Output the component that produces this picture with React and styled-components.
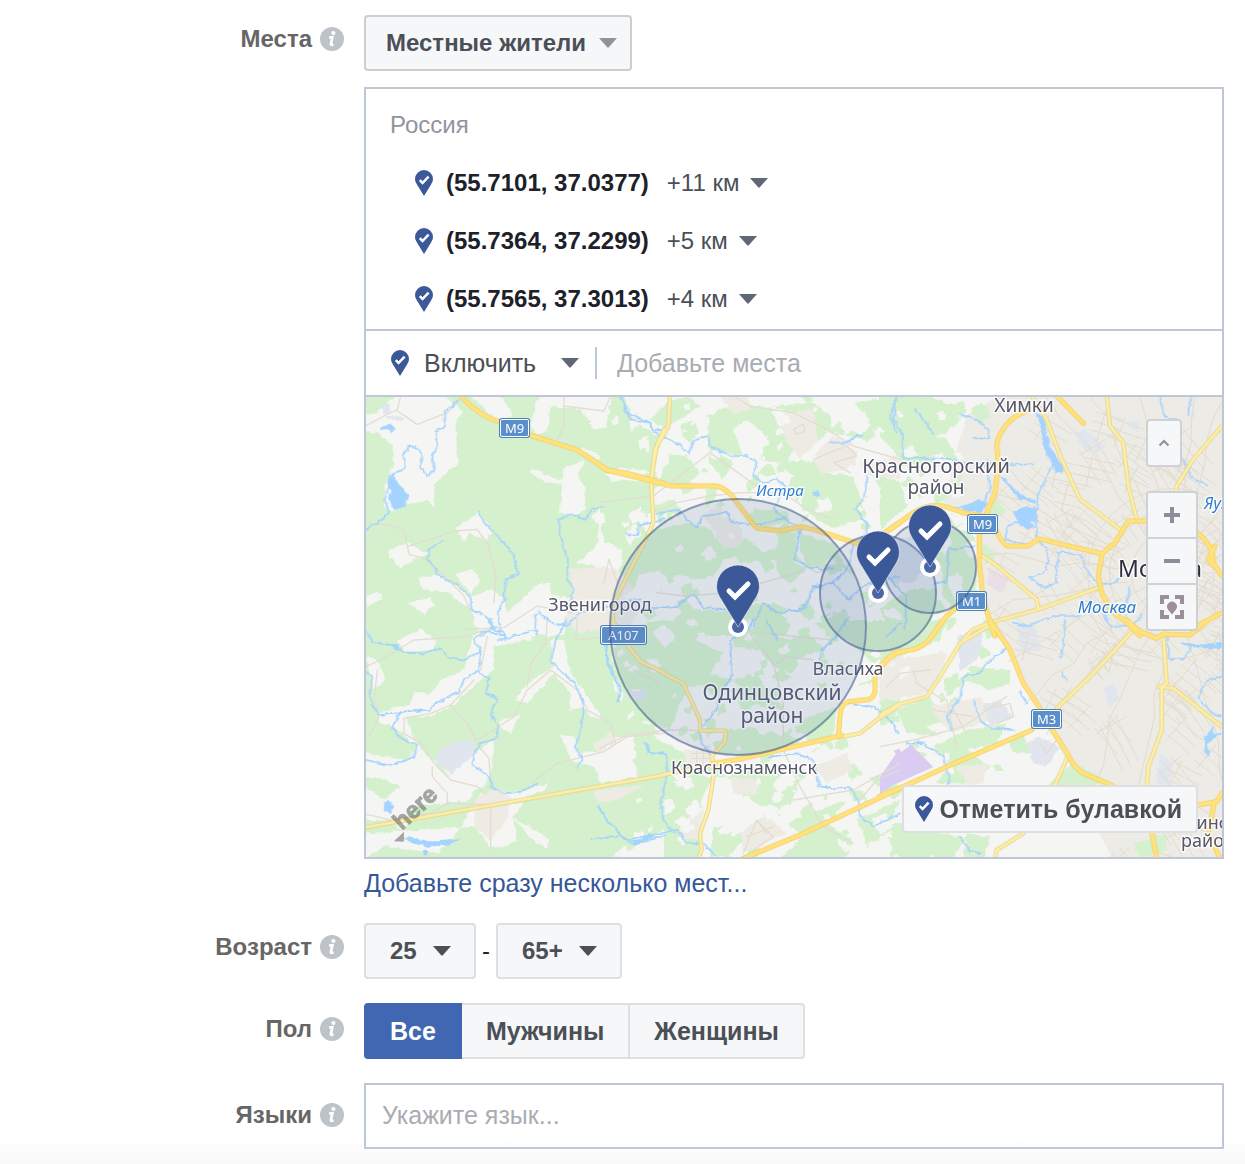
import React from 'react';
import styled, { createGlobalStyle, css } from 'styled-components';

const GlobalStyle = createGlobalStyle`
	* {
		box-sizing: border-box;
	}
	body {
		margin: 0;
		background: #fff;
		font-family: 'Liberation Sans', Arial, Helvetica, sans-serif;
		font-size: 24px;
		line-height: 28px;
		color: #1d2129;
	}
	button,
	input,
	select {
		margin: 0;
		font: inherit;
	}
	button,
	select {
		cursor: pointer;
	}
`;

const Form = styled.form`
	display: flex;
	flex-direction: column;
	gap: 24px;
	padding: 15px 21px 15px 0;
	background: linear-gradient(to top, #f9f9f9, #fff 28px);
`;

const Row = styled.div`
	display: grid;
	grid-template-columns: 344px minmax(0, 1fr);
	column-gap: 20px;
	align-items: start;
`;

const RowLabel = styled.div`
	display: flex;
	justify-content: flex-end;
	align-items: center;
	gap: 8px;
	padding-top: ${(p) => p.$top || 12}px;
	height: ${(p) => (p.$top || 12) + 24}px;
	font-weight: bold;
	color: #666;

	svg {
		flex-shrink: 0;
	}
`;

const Stack = styled.div`
	display: flex;
	flex-direction: column;
	align-items: flex-start;
`;

/* the caret shares the grid cell of the select */
const SelectWrap = styled.div`
	display: inline-grid;
	align-items: center;

	select,
	svg {
		grid-area: 1 / 1;
	}
	svg {
		justify-self: end;
		margin-right: ${(p) => p.$caretRight || 0}px;
		pointer-events: none;
	}
`;

const BoxSelect = styled.select`
	appearance: none;
	height: 56px;
	padding: 0 ${(p) => p.$right}px 0 ${(p) => p.$left}px;
	border: 2px solid ${(p) => (p.$dark ? '#ccced2' : '#dddfe2')};
	border-radius: 4px;
	background: #f6f7f9;
	color: #4b4f56;
	font-weight: bold;
`;

const PlainSelect = styled.select`
	appearance: none;
	height: 32px;
	padding: 0 ${(p) => p.$right}px 0 0;
	border: 0;
	background: transparent;
	color: #4b4f56;
	font-size: ${(p) => (p.$large ? 25 : 24)}px;
`;

const Locations = styled.div`
	align-self: stretch;
	margin: 16px 0 10px;
	border: 2px solid #bdc7d8;
	border-top-color: #c4c8cf;
	background: #fff;
`;

const LocationList = styled.ul`
	margin: 0;
	padding: 7px 24px 1px;
	list-style: none;
`;

const Country = styled.li`
	display: flex;
	align-items: center;
	height: 58px;
	color: #90949c;
`;

const Location = styled.li`
	display: flex;
	align-items: center;
	height: 58px;
	padding-left: 25px;

	b {
		margin: 0 18px 0 13px;
	}
`;

const AddBar = styled.div`
	display: flex;
	align-items: center;
	height: 68px;
	padding: 0 25px;
	border: solid #bdc7d8;
	border-width: 2px 0;

	> svg {
		margin-right: 15px;
	}
`;

const Divider = styled.span`
	width: 2px;
	height: 32px;
	margin: 0 20px 0 16px;
	background: #bdc7d8;
`;

const PlaceInput = styled.input`
	flex: 1;
	min-width: 0;
	height: 40px;
	padding: 0;
	border: 0;
	outline: 0;
	background: transparent;
	font-size: 25px;

	&::placeholder {
		color: #a9acb1;
		opacity: 1;
	}
`;

const MapBox = styled.div`
	position: relative;
	overflow: hidden;

	> svg {
		display: block;
		width: 100%;
		height: 460px;
	}
`;

const MapControls = styled.div`
	position: absolute;
	top: 22px;
	right: 24px;
	display: flex;
	flex-direction: column;
	align-items: flex-start;
	gap: 24px;
`;

const mapButton = css`
	display: flex;
	align-items: center;
	justify-content: center;
	padding: 0;
	background: #f6f7f9;
`;

const UpButton = styled.button`
	${mapButton}
	width: 36px;
	height: 48px;
	border: 2px solid #cfd1d5;
	border-radius: 4px;
`;

const ZoomGroup = styled.div`
	width: 52px;
	border: 2px solid #cfd1d5;
	border-radius: 4px;
	overflow: hidden;

	button {
		${mapButton}
		width: 100%;
		height: 44px;
		border: 0;
	}
	button + button {
		height: 46px;
		border-top: 2px solid #cfd1d5;
	}
`;

const DropPinButton = styled.button`
	${mapButton}
	position: absolute;
	right: 24px;
	bottom: 24px;
	gap: 6px;
	height: 48px;
	padding: 0 14px 0 11px;
	border: 2px solid #dddfe2;
	border-radius: 4px;
	color: #4b4f56;
	font-size: 25px;
	font-weight: bold;
`;

const BulkLink = styled.a`
	margin-bottom: 2px;
	color: #365899;
	font-size: 25px;
	text-decoration: none;
`;

const Range = styled.div`
	display: flex;
	align-items: center;
	gap: 6px;
`;

const Segments = styled.div`
	display: flex;
`;

/* neighbours share one border, the active segment lies over both */
const Segment = styled.button`
	position: relative;
	height: 56px;
	padding: 0 24px;
	border: 2px solid #dddfe2;
	background: #f6f7f9;
	color: #4b4f56;
	font-size: 25px;
	font-weight: bold;

	&:not(:first-child) {
		margin-left: -2px;
	}
	&:first-child {
		border-radius: 4px 0 0 4px;
	}
	&:last-child {
		border-radius: 0 4px 4px 0;
	}
	${(p) =>
		p.$active &&
		css`
			z-index: 1;
			border-color: #4267b2;
			background: #4267b2;
			color: #fff;
		`}
`;

const LanguageInput = styled.input`
	width: 100%;
	height: 66px;
	padding: 0 16px 2px;
	border: 2px solid #bdc7d8;
	background: transparent;
	font-size: 25px;

	&::placeholder {
		color: #a9acb1;
		opacity: 1;
	}
`;

const InfoIcon = () => (
	<svg width="24" height="24" viewBox="0 0 24 24" aria-hidden="true">
		<circle cx="12" cy="12" r="12" fill="#bec3c9" />
		<circle cx="13.4" cy="6" r="2.1" fill="#fff" />
		<path
			d="M9.2 10.4h3.200l-1.500 6.200q-.3 1.600 1 1.300l1.600-.6"
			fill="none"
			stroke="#fff"
			strokeWidth="2.6"
		/>
	</svg>
);

const Caret = ({ color = '#606775' }) => (
	<svg width="18" height="10" viewBox="0 0 18 10" aria-hidden="true">
		<path d="M0 0h18L9.8 9.3q-.8.8-1.6 0z" fill={color} />
	</svg>
);

const PIN = 'M0 0L-16.5-27C-20-32.500-21.400-36-21.400-40.600A21.400 21.400 0 0 1 21.400-40.600C21.400-36 20-32.500 16.500-27Z';

const PinIcon = () => (
	<svg width="18" height="26" viewBox="-21.500 -62 43 62" aria-hidden="true">
		<path d={PIN} fill="#3b5998" />
		<path
			d="M-10-38l6.500 7L11-46"
			fill="none"
			stroke="#fff"
			strokeWidth="6"
		/>
	</svg>
);

/* ---------- map drawing ---------- */

// Origins of the six map tiles. Inside a tile one pixel is three units.
const TILES = {
	a: [-6, -3],
	b: [702, -3],
	c: [1542, -3],
	d: [-6, 669],
	e: [702, 669],
	f: [1542, 669],
};

const FIELDS = {
	a: [
		'M95 0L240 0 300 45 275 75 280 205 240 235 210 270 212 335 190 315 130 325 75 350 60 330 62 270 90 205 85 150 40 110 5 105 5 60 40 45Z',
		'M320 0L405 0 440 40 440 65 400 75Z',
		'M500 80L525 0 745 0 725 95 690 100 650 40 560 30 550 105 515 118Z',
		'M780 0L900 0 900 110 860 125 810 75Z',
		'M650 155L705 175 710 190 660 175Z',
		'M750 215L795 172 850 190 860 240Z',
		'M495 225L515 218 560 245 598 250 600 215 665 190 640 235 665 275 662 345 625 360 585 348 595 265 545 258Z',
		'M720 295L785 315 712 390 720 440 780 450 775 500 750 560 690 510 635 500 690 460 700 440 705 385 680 360 722 325Z',
		'M275 395L345 350 385 400 365 435 320 410 300 440Z',
		'M75 460L130 440 190 475 155 490 110 515 75 480Z',
		'M160 545L230 535 320 600 385 580 420 605 430 650 520 565 560 560 565 600 620 605 600 720 380 720 330 690 320 640 250 590 175 580Z',
		'M270 535L325 520 350 555 320 590Z',
		'M130 620L200 605 210 630 180 655Z',
		'M5 600L40 590 55 610 10 630Z',
		'M820 340L850 345 860 380 835 370Z',
	],
	d: [
		'M100 60L170 28 220 65 210 90 120 95Z',
		'M330 40L400 0 520 10 500 60 390 80 390 150 350 180 260 260 200 290 130 290 150 360 250 470 340 490 320 540 150 560 120 640 80 600 5 600 5 500 60 540 110 500 60 480 5 470 5 400 130 420 160 380 90 320 50 310 40 280 140 250 150 220 200 220 230 180 300 150 310 110Z',
		'M240 450L330 400 390 360 385 440 360 500 300 520Z',
		'M450 240L500 180 570 140 560 60 600 60 620 160 700 270 720 300 680 290 660 260 620 270 620 220 570 160 490 250Z',
		'M410 300L470 285 440 340 405 320Z',
		'M590 345L635 350 640 400 720 390 760 330 810 350 820 470 710 490 690 440 620 420Z',
		'M745 310L750 180 780 190 775 310Z',
		'M740 0L900 0 860 60 880 110 800 150 770 180 745 120Z',
		'M5 110L40 120 65 180 30 210Z',
		'M350 520L430 545 480 550 445 590 460 660 420 680 380 680 330 620 5 640 5 715 60 680 220 700 280 640Z',
		'M440 590L560 660 550 685 520 670Z',
		'M380 520L480 510 555 490 540 510 450 545Z',
		'M820 650L900 620 900 715 760 715Z',
	],
};

// forests on the lighter right part of the map
const WOODS = {
	b: [
		'M0 100L75 60 150 105 180 140 150 225 60 215 20 235 0 200Z',
		'M0 270L60 250 150 260 160 380 130 440 70 480 0 340Z',
		'M150 70L200 20 260 0 300 30 240 70 190 95Z',
		'M320 90L350 40 480 30 600 60 610 110 560 200 480 190 500 120 440 70 400 100 430 180 340 160 400 200 370 250 330 200Z',
		'M200 170L260 180 300 230 270 260 180 260Z',
		'M520 30L640 20 720 80 800 130 690 110 640 80Z',
		'M760 20L900 0 900 130 820 80Z',
		'M530 200L640 190 680 230 760 240 800 360 700 400 620 350 560 280 580 240Z',
		'M160 330L220 310 250 350 180 390Z',
		'M130 440L150 405 250 380 330 400 350 430 395 455 440 425 490 470 540 455 545 490 420 500 390 470 340 540 280 550 210 520 90 540 60 570Z',
		'M470 340L560 345 570 380 480 390Z',
		'M600 410L700 440 740 520 620 510 600 460Z',
		'M530 400L590 410 585 500 620 520 570 560 530 530Z',
		'M205 690L240 650 290 640 400 650 440 690 400 720 200 720Z',
		'M430 630L520 620 580 650 560 720 480 710Z',
		'M660 660L740 640 770 720 680 720Z',
	],
	c: [
		'M0 0L110 0 180 10 240 60 200 110 130 130 60 180 0 120Z',
		'M40 130L130 110 200 130 240 190 160 200 60 210Z',
		'M0 230L60 260 80 330 0 400Z',
		'M200 30L250 15 260 50 215 60Z',
		'M180 500L240 400 285 420 290 600 220 640 190 600Z',
		'M40 610L90 580 170 580 150 700 40 720 0 640Z',
	],
	e: [
		'M40 90L80 30 170 0 300 20 290 60 370 100 330 160 390 180 350 230 270 200 240 250 210 330 120 300 60 200Z',
		'M400 30L470 20 560 60 620 40 680 90 600 110 580 160 520 140 480 90 400 80Z',
		'M400 180L490 150 520 230 560 270 480 260Z',
		'M380 330L460 320 560 350 620 320 600 380 440 410 350 400Z',
		'M110 360L200 370 220 440 240 470 340 470 290 560 180 550 220 610 120 680 0 715 0 520 110 510Z',
		'M0 0L30 20 40 200 100 290 170 330 60 350 0 360Z',
		'M640 10L780 0 900 0 900 80 820 130 740 60Z',
		'M740 200L820 180 800 220Z',
		'M600 300L710 260 700 350 640 400Z',
		'M380 470L450 440 560 450 520 490 600 480 570 560 480 560Z',
		'M560 610L680 560 740 540 700 590 600 640Z',
		'M660 600L760 660 740 715 540 715Z',
		'M770 600L900 540 860 640 800 680Z',
		'M340 620L440 640 400 700 330 715Z',
	],
	f: [
		'M0 0L100 0 200 0 180 60 80 100 0 160Z',
		'M0 220L60 240 40 300 0 320Z',
		'M190 180L270 140 390 150 390 190 330 210 260 180 200 230Z',
		'M50 270L150 230 200 300 140 320 180 350 80 340Z',
		'M160 380L260 330 380 310 350 370 260 390 330 440 280 490 170 490 210 430Z',
		'M380 360L430 340 450 400 400 400Z',
		'M500 500L580 430 680 480 640 500Z',
		'M0 620L100 600 180 640 260 650 220 715 60 715Z',
		'M260 640L330 650 320 680 250 715Z',
		'M760 670L860 640 860 690 780 715Z',
		'M310 0L350 10 360 40 320 60Z',
	],
};

const TOWNS = {
	a: ['M620 520L740 512 790 550 830 640 800 690 640 710 600 670 625 600Z'],
	b: [
		'M360 0L440 0 450 40 400 55Z',
		'M540 50L640 40 655 130 600 190 550 120Z',
		'M640 180L700 120 780 150 760 220 660 230Z',
		'M310 350L360 330 430 400 430 440 370 460 340 400Z',
		'M780 200L900 180 900 250 800 240Z',
	],
	d: ['M330 540L400 500 440 530 430 600 380 660 330 620Z', 'M690 370L740 340 760 370 700 400Z', 'M690 510L840 495 760 540 700 550Z'],
	e: [
		'M250 390L330 380 340 430 260 440Z',
		'M390 470L480 480 470 525 400 520Z',
		'M240 600L310 570 300 660 240 650Z',
		'M420 640L500 580 560 640 430 700Z',
		'M640 440L740 400 760 450 680 490Z',
		'M830 170L900 100 900 240 860 240Z',
	],
	f: ['M0 120L120 110 210 90 150 220 0 240Z', 'M150 260L300 230 330 300 210 340Z', 'M230 440L320 430 310 490 260 495Z'],
};

const INDUSTRY = {
	a: ['M50 25L80 20 80 50 55 50Z', 'M65 60L120 62 115 72 65 66Z', 'M575 135L625 122 600 138Z'],
	c: ['M20 440L110 420 160 480 100 560 30 560Z', 'M580 110L620 100 650 130 620 170Z', 'M620 130L680 150 650 170Z', 'M740 80L780 70 770 110Z', 'M920 50L950 50 930 70Z'],
	d: ['M210 420L235 380 325 352 335 400 260 462Z', 'M790 215L850 210 840 240 790 235Z'],
	f: ['M230 50L320 10 290 120 240 150Z', 'M410 20L460 10 485 90 430 100Z', 'M310 250L360 240 400 290 330 320Z', 'M440 370L480 350 540 380 500 440 460 430Z', 'M840 400L880 430 870 500 830 490Z', 'M670 210L700 190 720 240 690 260Z'],
};

const LAKES = {
	a: ['M72 238L92 240 108 270 132 298 125 332 100 340 85 332 72 310 82 285 70 262Z', 'M50 95L80 85 92 100 85 108 70 98 55 105Z'],
	b: ['M640 285L655 282 657 300 645 305Z'],
	c: [
		'M468 45L492 65 505 140 525 175 548 215 543 233 528 225 510 195 492 160 485 100Z',
		'M400 345L440 330 470 340 468 370 440 375 470 390 440 400 410 375Z',
		'M240 335L300 308 325 325 300 350 260 345Z',
		'M355 235L375 245 405 280 440 305 465 310 465 320 420 312 385 270Z',
	],
	d: ['M60 550L75 543 92 560 75 580 60 570Z', 'M115 650L150 655 180 662 230 660 290 655 260 672 200 682 150 672Z', 'M175 690L195 690 185 712Z', 'M80 72L100 72 108 92 90 88Z'],
	e: ['M85 662L120 658 150 640 165 650 110 672Z'],
	f: [
		'M900 65L960 75 1025 65 1025 85 960 85 910 78Z',
		'M975 350L1000 320 1005 350 980 375 990 410 975 405Z',
	],
};

const RIVERS = {
	a: [
		'M282 10L245 45 240 90 215 105 218 150 205 180 210 225 190 237 170 215 175 180 160 155 135 150 118 180 122 215 85 237',
		'M75 270L62 310 75 350 40 380 5 400',
		'M345 348L360 380 415 435 450 480 462 535 425 550 420 610 402 650 410 718',
		'M238 432L195 460 190 490 235 545 280 565 320 605 322 640 380 670 385 700 350 718',
		'M720 330L680 340 665 370 620 355 585 370 590 430 612 490 610 550 630 580 620 610',
		'M770 0L785 40 800 70 860 80 870 105 900 100',
		'M785 415L820 415 825 385 870 380 900 365',
		'M520 718L510 660 525 645 560 680 610 690 640 655 690 640 750 625 830 610',
	],
	b: [
		'M65 0L75 45 150 80 160 110 240 145 265 175 280 135 320 120 335 155 400 180 440 180 470 200 460 240 490 260 530 250 555 270 520 340 560 370 600 400 585 490 630 515 700 520',
		'M160 355L235 340 260 370 290 395 310 360 380 350 400 380 470 385 560 365',
		'M690 140L735 140 770 120 790 118',
		'M890 0L870 60 890 110',
		'M800 240L795 300 765 340 800 380 800 410 760 450 740 520 700 560 640 575 610 640 530 650 490 620 460 690',
		'M90 610L130 640 230 630 280 595 310 635 380 640',
		'M640 570L700 560 745 610 790 570 900 540',
	],
	c: [
		'M50 0L40 70 65 110 70 190 130 185 200 190 290 205 350 200 400 205 460 205',
		'M105 40L130 70 160 115M240 55L290 70 330 105 325 130 280 125',
		'M320 195L330 280 310 320 220 335',
		'M520 200L490 270 470 300 470 420 505 470 500 520 450 545 490 575 530 560 535 470 600 475 630 540 655 560',
		'M470 370L385 385 375 430 440 445',
		'M165 560L200 560 205 460 290 450M0 500L40 560 80 600 75 700',
		'M655 560L700 565 740 530M750 570L740 620 M790 650Q770 700 700 690Q665 670 680 640M400 680L440 690 520 660 600 660',
		'M840 0L850 60 900 75M935 0L925 60M905 180L930 240 985 270',
	],
	d: [
		'M5 30L25 65 90 80 120 98 180 100 225 85 260 115 300 122 350 90 330 60 350 35 400 40 430 55 460 45 520 30',
		'M375 0L390 30 420 35 425 60 400 60',
		'M350 90L345 150 300 180 285 215 215 250 195 270 110 275 85 320 110 355 160 375 150 410 80 437 5 420',
		'M345 155L375 180 365 220 400 235 380 280 402 320 400 355 345 370 322 430 375 470 390 510',
		'M380 500L420 520 470 515 520 492',
		'M5 155L25 170 15 230 40 285 110 280',
		'M610 0L575 60 560 125 600 160 635 190 660 260 650 330 635 385 655 420 640 440',
		'M720 60L735 130 770 210 765 245M840 365L855 400 900 400',
		'M680 660L770 645 800 672 830 670 900 645M700 555L720 590 770 645',
	],
	e: [
		'M20 60L20 130 60 200 55 245',
		'M460 0L440 35 390 60 395 180 370 200 345 270 300 330 305 370 335 410',
		'M740 0L700 60 665 90 660 140M140 370L150 400 200 405 200 470 180 550 190 600 225 640M0 560L15 595 80 660 230 630 260 670 310 670 350 710',
		'M510 410L590 400 640 420 660 500 700 505 750 500 775 545 780 590 820 620 900 580',
		'M740 250L830 265 880 310 895 340M500 0L530 60',
	],
	f: [
		'M60 10L20 50M385 80L320 130 300 160 250 170 240 235 200 290 215 330',
		'M280 240L300 300 330 325 400 330M420 215L440 250M80 370L130 370 190 410 210 490 200 500',
		'M1025 170L980 180 955 230 1000 285 1025 290M860 50L870 120 910 118 935 80',
		'M555 0L550 80 540 110M545 160L560 180M300 700L265 690 240 650',
		'M1025 340L980 350 975 400',
	],
};

const MAJOR = {
	a: ['M290 0Q345 60 400 75L500 118 640 162 730 222 790 232 900 262'],
	b: ['M0 208L20 222 155 255 215 270 340 270Q370 268 400 305L460 385Q470 398 480 398L545 404 600 392 640 400 770 442 835 425 900 380'],
	c: [
		'M0 420L40 392 100 350Q140 322 190 330L250 350 325 362',
		'M450 40Q400 60 385 80 350 120 350 150L355 200 345 290 320 350',
		'M298 385L298 500 308 600 330 680 345 720M320 350L345 395Q370 450 385 450L445 450 475 428 560 448 665 472',
		'M800 375L745 375 705 440Q665 470 665 480L655 540 665 590 690 640 740 680 780 720',
		'M520 -10L540 10 610 82M953 410Q1000 450 1000 500L1025 540M1005 450L985 490 1000 510M1025 650L950 690M240 625L200 660 155 720',
	],
	e: ['M335 432L430 415 560 385 700 352 725 345M900 95Q860 110 825 165L825 215Q820 240 795 240L745 245Q720 255 720 290L715 350M430 715L600 645 900 505'],
	f: [
		'M190 0L150 55Q130 80 100 88L40 100 0 138',
		'M330 0L390 90 430 190 480 265 520 335 565 405Q580 440 610 460L700 498',
		'M0 528L80 495 200 440 455 330',
		'M740 0L780 35 830 55 850 42 930 45 985 0M815 635L830 715M950 555L1010 545 1025 520M1003 545L985 640 1020 715',
	],
};

const MINOR = {
	a: ['M900 100L880 145 865 220 862 260 868 380 850 420 750 620 745 680 790 720'],
	b: ['M210 0L205 90 165 160 155 250'],
	c: [
		'M455 0L500 70 545 190 600 310 720 400',
		'M680 0L690 90 730 140 745 270 770 370',
		'M1030 85L940 190 890 270 885 300',
		'M300 475L345 505 470 610 475 640 655 575M475 640L330 680 280 700 250 730',
	],
	d: ['M745 0L790 75 830 125 900 158', 'M5 622L300 570 900 465'],
	e: ['M190 160L250 190 300 300 300 332 378 332 375 365 335 410 345 440 325 570 300 640 305 690 295 715', 'M190 464L220 458 335 435', 'M715 352L780 340 830 300 900 255'],
	f: ['M0 285L50 255 140 230 180 170 240 70 330 15', 'M760 30L640 160 530 265', 'M850 50L860 190 845 200 845 330 805 440 800 500', 'M835 200L880 205 1025 320', 'M565 405L525 495', 'M430 640L350 690 345 715'],
};

const LANES = {
	a: [
		'M5 90L60 60 100 40 110 0M100 45L160 85 250 50 300 0M5 380L60 385 120 400 135 475 190 490 300 600 330 670',
		'M135 450L200 430 270 405 340 400 375 450 395 540 390 620',
		'M300 700L420 695 520 630 620 650 720 640M600 0L600 90 580 130M600 30L720 45 740 0M720 560L735 490 760 560',
	],
	b: [
		'M0 320L160 300 330 170 400 220 470 270M400 0L450 30 580 50 680 100 760 150 900 190M160 350L230 320 330 300 420 290 550 290 620 340 700 370',
		'M580 100L610 85 615 105 590 115ZM640 190L740 150 770 180 700 200 750 230M170 590L250 600 400 590 450 570 600 530 620 510M620 510L650 530 700 520',
	],
	d: [
		'M5 140L50 120 150 60 300 50 400 20M350 150L370 50M260 255L310 310 345 380 375 415 380 490M120 340L120 295 200 280 260 255 330 180M120 340L170 370 210 430 260 480 340 500 360 520',
		'M5 582L80 600 200 580 250 550 380 555M380 560L380 690M500 490L580 430 720 395 790 350 900 340M560 150L490 210 450 290 340 360M560 150L640 210 670 270 740 310 755 370',
		'M550 0L545 70 500 130 490 200M640 0L635 60 720 50M40 150L30 240 45 290 15 350M205 440L205 470 250 520 250 550',
	],
	e: [
		'M0 385L70 350 200 330 300 332M450 40L520 130 550 250 550 390 600 500 670 620 760 670M530 130L560 110 640 120M490 40L700 60',
		'M275 400H330M275 415H330M290 395V430M310 395V430M580 540L760 510 900 430M430 700L470 600 520 650 460 690M470 600L500 640M440 650L520 620M780 540L830 480 900 450M100 150L180 190',
	],
	f: ['M0 380L100 360 250 320 380 230M100 150L110 190 190 240M200 240L230 380M310 270L390 250 400 290 350 310M160 270L280 290 M210 250L260 340M20 200L60 160 150 150M480 370L500 400 530 360'],
};

const eachTile = (shapes, render) =>
	Object.entries(shapes).map(([tile, paths]) => (
		<g key={tile} transform={`translate(${TILES[tile].join(' ')})`}>
			{paths.map((d) => render(d))}
		</g>
	));

const random = (seed) => () => {
	seed = (seed * 16807) % 2147483647;
	return seed / 2147483647;
};

// radial streets around the city centre, plus short blocks of lanes
const cityStreets = () => {
	const rnd = random(77);
	const out = [];
	for (let i = 0; i < 24; i++) {
		const angle = (i / 24) * Math.PI * 2 + rnd() * 0.2;
		let d = '';
		for (let r = 50 + rnd() * 120; r < 820; r += 70) {
			const a = angle + (rnd() - 0.5) * 0.07;
			d += `${d ? 'L' : 'M'}${Math.round(2420 + r * Math.cos(a))} ${Math.round(530 + r * Math.sin(a))}`;
		}
		out.push(d);
	}
	for (let r = 60; r < 260; r += 65) {
		out.push(`M${2420 - r} 530a${r} ${r} 0 1 0 ${r * 2} 0a${r} ${r} 0 1 0 ${-r * 2} 0`);
	}
	for (let i = 0; i < 90; i++) {
		const x = 1880 + rnd() * 700;
		const y = rnd() * 1380;
		const a = rnd() * 0.9 + 0.2;
		const w = 60 + rnd() * 90;
		for (let k = 0; k < 3; k++) {
			const ox = x - Math.sin(a) * k * 28;
			const oy = y + Math.cos(a) * k * 28;
			out.push(`M${Math.round(ox)} ${Math.round(oy)}l${Math.round(w * Math.cos(a))} ${Math.round(w * Math.sin(a))}`);
		}
		out.push(`M${Math.round(x + 30)} ${Math.round(y)}l${Math.round(-90 * Math.sin(a))} ${Math.round(90 * Math.cos(a))}`);
	}
	return out.join('');
};

// small groves and clearings
const specks = (seed, count, x0, x1) => {
	const rnd = random(seed);
	let d = '';
	for (let i = 0; i < count; i++) {
		const x = Math.round(x0 + rnd() * (x1 - x0));
		const y = Math.round(rnd() * 1380);
		const s = 8 + Math.round(rnd() * 30);
		d += `M${x} ${y}l${s} ${-Math.round(s * rnd())} ${Math.round(s * rnd())} ${s} ${-s} ${Math.round(s * rnd())}z`;
	}
	return d;
};

const STREETS = cityStreets();
const GROVES = specks(11, 220, 720, 1880);
const CLEARINGS = specks(29, 190, 720, 1800);

const MapLabel = styled.text`
	font-family: 'Noto Sans', 'Open Sans', sans-serif;
	font-size: ${(p) => p.$size || 18}px;
	font-style: ${(p) => (p.$water ? 'italic' : 'normal')};
	fill: ${(p) => (p.$water ? '#2c7cd1' : p.$city ? '#2f2f3f' : '#55566a')};
	stroke: rgba(255, 255, 255, 0.8);
	stroke-width: 3px;
	stroke-linejoin: round;
	paint-order: stroke;
	text-anchor: ${(p) => (p.$start ? 'start' : 'middle')};
`;

const ShieldText = styled.text`
	font-family: 'Noto Sans', 'Open Sans', sans-serif;
	font-size: 13px;
	fill: #fff;
	text-anchor: middle;
`;

const HereText = styled.text`
	font-family: 'Liberation Sans', Arial, sans-serif;
	font-size: 24px;
	font-weight: bold;
	fill: #555;
	stroke: #555;
	stroke-width: 1px;
`;

const Shield = ({ x, y, width = 31, children }) => (
	<g transform={`translate(${x} ${y})`}>
		<rect width={width} height="20" rx="3" fill="#4d80bd" />
		<rect x="1.500" y="1.500" width={width - 3} height="17" rx="1.500" fill="#5b8fcc" stroke="#fff" />
		<ShieldText x={width / 2} y="15">
			{children}
		</ShieldText>
	</g>
);

const AREAS = [
	{ x: 372, y: 230, r: 128 },
	{ x: 512, y: 196, r: 58 },
	{ x: 564, y: 170, r: 46 },
];

const MapCanvas = () => (
	<svg viewBox="0 0 856 460" preserveAspectRatio="xMidYMid slice" role="img" aria-label="Карта">
		<defs>
			<filter id="rough" filterUnits="userSpaceOnUse" x="-40" y="-40" width="2660" height="1470">
				<feTurbulence type="fractalNoise" baseFrequency="0.05" numOctaves="4" seed="4" />
				<feDisplacementMap in="SourceGraphic" scale="15" xChannelSelector="R" yChannelSelector="G" />
			</filter>
			<clipPath id="city">
				<path d="M2000-10L2600-10 2600 1400 2240 1400 2130 1180 1980 900 1850 640 1840 360 1880 200Z" />
			</clipPath>
		</defs>
		<g transform="scale(.33333)" fill="none" strokeLinejoin="round" strokeLinecap="round">
			<rect width="2568" height="1380" fill="#d4f0cc" />
			<g filter="url(#rough)">
				<g fill="#f5f5f3">
					{eachTile(FIELDS, (d) => <path key={d} d={d} />)}
					<path d="M860-40L2640-40 2640 1440 1000 1440 1010 1100 830 1000 780 640 860 420 720 230 900 120Z" />
				</g>
				<path d="M1950-40L2640-40 2640 1440 2260 1440 2150 1180 2000 900 1900 700 1850 640 1840 360 1730 330 1760 200 1800 60Z" fill="#edebe6" />
				<g fill="#d4f0cc">
					{eachTile(WOODS, (d) => <path key={d} d={d} />)}
					<path d={GROVES} />
				</g>
				<g fill="#eeebe5">{eachTile(TOWNS, (d) => <path key={d} d={d} />)}</g>
				<path d={CLEARINGS} fill="#f5f5f3" />
				<g fill="#e1e6ee">{eachTile(INDUSTRY, (d) => <path key={d} d={d} />)}</g>
				<path d="M1870 515L1930 540 1905 590 1862 560Z" fill="#ebdfe6" />
			</g>
			<path d="M1542 1192L1542 1140 1590 1070 1582 1062 1600 1055 1606 1065 1635 1043 1702 1110 1580 1165Z" fill="#d9cbf2" />
			<path d={STREETS} clipPath="url(#city)" stroke="#e2dccf" strokeWidth="3" />
			<g stroke="#e3ddd3" strokeWidth="4">{eachTile(LANES, (d) => <path key={d} d={d} />)}</g>
			<g filter="url(#rough)">
				<g stroke="#a4d3ff" strokeWidth="5">{eachTile(RIVERS, (d) => <path key={d} d={d} />)}</g>
				<g fill="#a4d3ff">{eachTile(LAKES, (d) => <path key={d} d={d} />)}</g>
			</g>
			<g stroke="#e9d58f" strokeWidth="13">{eachTile(MINOR, (d) => <path key={d} d={d} />)}</g>
			<g stroke="#fbeea6" strokeWidth="8">{eachTile(MINOR, (d) => <path key={d} d={d} />)}</g>
			<g stroke="#f8cf68" strokeWidth="15">{eachTile(MAJOR, (d) => <path key={d} d={d} />)}</g>
			<g stroke="#fee27c" strokeWidth="10">{eachTile(MAJOR, (d) => <path key={d} d={d} />)}</g>
		</g>

		<MapLabel x="658" y="15" $size={19}>Химки</MapLabel>
		<MapLabel x="570" y="76" $size={20}>Красногорский</MapLabel>
		<MapLabel x="570" y="97" $size={19}>район</MapLabel>
		<MapLabel x="414" y="99" $size={15} $water>Истра</MapLabel>
		<MapLabel x="234" y="214">Звенигород</MapLabel>
		<MapLabel x="482" y="278">Власиха</MapLabel>
		<MapLabel x="406" y="303" $size={21}>Одинцовский</MapLabel>
		<MapLabel x="406" y="326" $size={21}>район</MapLabel>
		<MapLabel x="378" y="377">Краснознаменск</MapLabel>
		<MapLabel x="741" y="216" $size={17} $water>Москва</MapLabel>
		<MapLabel x="794" y="180" $size={23} $city>Москва</MapLabel>
		<MapLabel x="838" y="112" $size={16} $water $start>Яуза</MapLabel>
		<MapLabel x="797" y="432" $start>Ленинский</MapLabel>
		<MapLabel x="815" y="450" $start>район</MapLabel>

		<Shield x={133} y={21}>M9</Shield>
		<Shield x={601} y={117}>M9</Shield>
		<Shield x={590} y={194}>M1</Shield>
		<Shield x={665} y={312}>M3</Shield>
		<Shield x={234} y={228} width={47}>A107</Shield>

		<g transform="translate(36 434) rotate(-43)" opacity="0.5">
			<HereText x="0" y="0">here</HereText>
			<path d="M-13 2L1 2-6 9Z" fill="#555" />
		</g>

		{AREAS.map((a) => (
			<circle
				key={a.x}
				cx={a.x}
				cy={a.y}
				r={a.r}
				fill="rgba(90, 118, 175, 0.15)"
				stroke="rgba(59, 84, 140, 0.55)"
				strokeWidth="2"
			/>
		))}
		{AREAS.map((a) => (
			<g key={a.x} transform={`translate(${a.x} ${a.y})`}>
				<circle r="10" fill="#fff" />
				<circle r="6" fill="#4a66a5" />
				<path d={PIN} fill="#3b5998" stroke="rgba(255, 255, 255, 0.5)" />
				<path
					d="M-9-36l6 6L10-43"
					fill="none"
					stroke="#fff"
					strokeWidth="5"
					strokeLinecap="round"
				/>
			</g>
		))}
	</svg>
);

const LOCATIONS = [
	{ coords: '(55.7101, 37.0377)', radius: '+11 км' },
	{ coords: '(55.7364, 37.2299)', radius: '+5 км' },
	{ coords: '(55.7565, 37.3013)', radius: '+4 км' },
];

const GENDERS = ['Все', 'Мужчины', 'Женщины'];

const App = () => {
	const [gender, setGender] = React.useState('Все');

	return (
		<>
			<GlobalStyle />
			<Form onSubmit={(e) => e.preventDefault()}>
				<Row>
					<RowLabel as="label" htmlFor="places">
						Места <InfoIcon />
					</RowLabel>
					<Stack>
						<SelectWrap $caretRight={15}>
							<BoxSelect id="places" $left={20} $right={43} $dark>
								<option>Местные жители</option>
							</BoxSelect>
							<Caret color="#909499" />
						</SelectWrap>

						<Locations>
							<LocationList>
								<Country>Россия</Country>
								{LOCATIONS.map((l) => (
									<Location key={l.coords}>
										<PinIcon />
										<b>{l.coords}</b>
										<SelectWrap>
											<PlainSelect $right={28} aria-label={`Радиус ${l.coords}`}>
												<option>{l.radius}</option>
											</PlainSelect>
											<Caret />
										</SelectWrap>
									</Location>
								))}
							</LocationList>
							<AddBar>
								<PinIcon />
								<SelectWrap>
									<PlainSelect $right={42} $large aria-label="Действие">
										<option>Включить</option>
									</PlainSelect>
									<Caret />
								</SelectWrap>
								<Divider />
								<PlaceInput placeholder="Добавьте места" aria-label="Добавьте места" />
							</AddBar>
							<MapBox>
								<MapCanvas />
								<MapControls>
									<UpButton type="button" aria-label="Свернуть карту">
										<svg width="12" height="8" viewBox="0 0 12 8">
											<path d="M1.500 6.500L6 2l4.500 4.500" fill="none" stroke="#8d919a" strokeWidth="2" />
										</svg>
									</UpButton>
									<ZoomGroup>
										<button type="button" aria-label="Увеличить">
											<svg width="16" height="16" viewBox="0 0 16 16">
												<path d="M0 8h16M8 0v16" stroke="#8a8f9c" strokeWidth="4" />
											</svg>
										</button>
										<button type="button" aria-label="Уменьшить">
											<svg width="16" height="16" viewBox="0 0 16 16">
												<path d="M0 8h16" stroke="#8a8f9c" strokeWidth="4" />
											</svg>
										</button>
										<button type="button" aria-label="Показать все места">
											<svg width="24" height="24" viewBox="0 0 24 24">
												<path
													d="M2 9V2h7M15 2h7v7M22 15v7h-7M9 22H2v-7"
													fill="none"
													stroke="#9b8f9c"
													strokeWidth="4"
												/>
												<path d="M12 19.500L8 14.500a4.900 4.900 0 1 1 8 0z" fill="#9b8f9c" />
											</svg>
										</button>
									</ZoomGroup>
								</MapControls>
								<DropPinButton type="button">
									<PinIcon />
									Отметить булавкой
								</DropPinButton>
							</MapBox>
						</Locations>
						<BulkLink href="#bulk">Добавьте сразу несколько мест...</BulkLink>
					</Stack>
				</Row>

				<Row>
					<RowLabel as="label" htmlFor="age-from">
						Возраст <InfoIcon />
					</RowLabel>
					<Range>
						<SelectWrap $caretRight={25}>
							<BoxSelect id="age-from" $left={24} $right={57}>
								<option>25</option>
							</BoxSelect>
							<Caret color="#4b4f56" />
						</SelectWrap>
						-
						<SelectWrap $caretRight={25}>
							<BoxSelect aria-label="Возраст до" $left={24} $right={57}>
								<option>65+</option>
							</BoxSelect>
							<Caret color="#4b4f56" />
						</SelectWrap>
					</Range>
				</Row>

				<Row>
					<RowLabel $top={14} id="gender">
						Пол <InfoIcon />
					</RowLabel>
					<Segments role="group" aria-labelledby="gender">
						{GENDERS.map((g) => (
							<Segment
								key={g}
								type="button"
								$active={g === gender}
								aria-pressed={g === gender}
								onClick={() => setGender(g)}
							>
								{g}
							</Segment>
						))}
					</Segments>
				</Row>

				<Row>
					<RowLabel as="label" htmlFor="languages" $top={20}>
						Языки <InfoIcon />
					</RowLabel>
					<LanguageInput id="languages" placeholder="Укажите язык..." />
				</Row>
			</Form>
		</>
	);
};

export default App;
